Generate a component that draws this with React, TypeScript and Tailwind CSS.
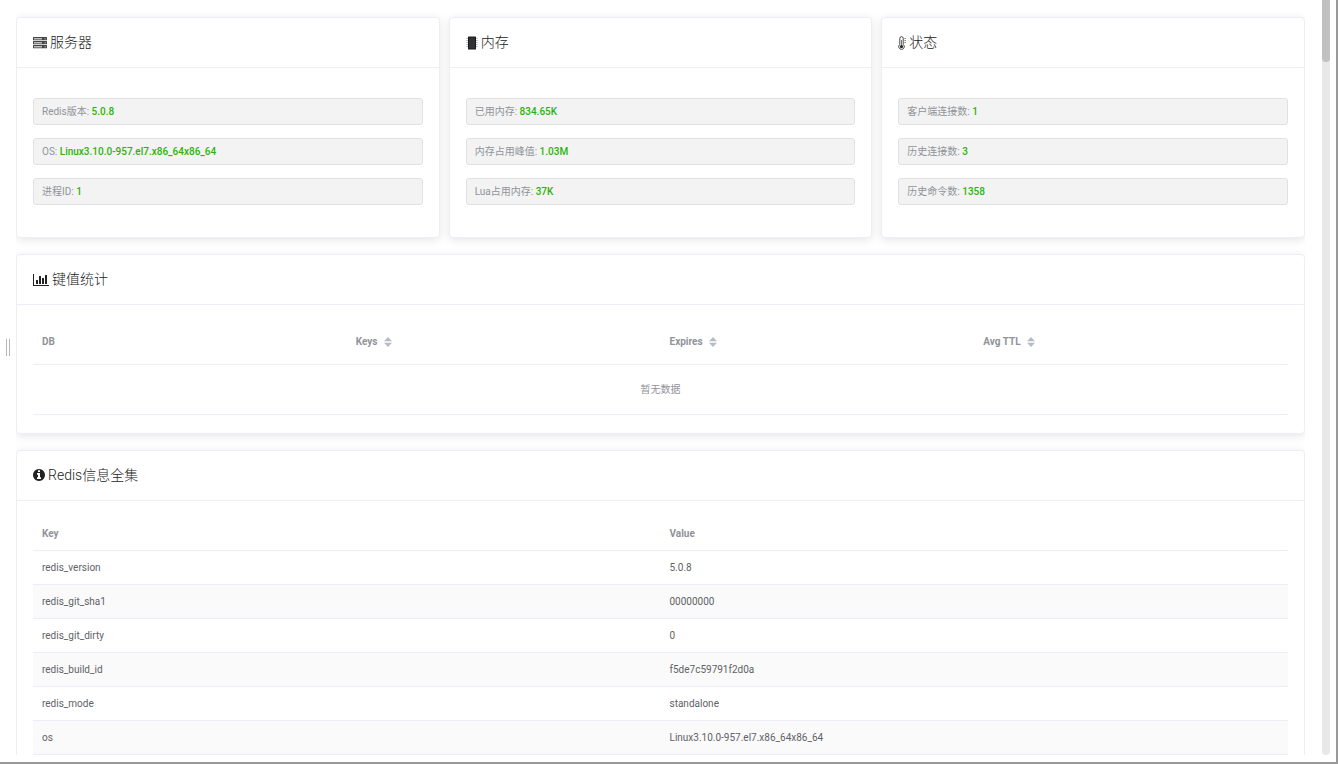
import { ReactNode } from 'react';

interface InfoItem {
  label: string;
  value: string;
}

interface CardProps {
  icon: ReactNode;
  title: string;
  children: ReactNode;
}

const serverInfo: InfoItem[] = [
  { label: 'Redis版本', value: '5.0.8' },
  { label: 'OS', value: 'Linux3.10.0-957.el7.x86_64x86_64' },
  { label: '进程ID', value: '1' },
];

const memoryInfo: InfoItem[] = [
  { label: '已用内存', value: '834.65K' },
  { label: '内存占用峰值', value: '1.03M' },
  { label: 'Lua占用内存', value: '37K' },
];

const statusInfo: InfoItem[] = [
  { label: '客户端连接数', value: '1' },
  { label: '历史连接数', value: '3' },
  { label: '历史命令数', value: '1358' },
];

const allInfo = [
  ['redis_version', '5.0.8'],
  ['redis_git_sha1', '00000000'],
  ['redis_git_dirty', '0'],
  ['redis_build_id', 'f5de7c59791f2d0a'],
  ['redis_mode', 'standalone'],
  ['os', 'Linux3.10.0-957.el7.x86_64x86_64'],
];

const ServerIcon = () => (
  <svg viewBox="0 0 14 12" className="h-3 w-3.5" aria-hidden="true">
    {[0, 4, 8].map((y) => (
      <g key={y}>
        <rect x="0" y={y} width="14" height="3.3" rx="0.5" fill="#444" />
        <rect x="1" y={y + 1} width="8" height="1.5" fill="#bbb" />
        <rect x="11.5" y={y + 1.2} width="1.2" height="1.2" rx="0.6" fill="#ddd" />
      </g>
    ))}
  </svg>
);

const ChipIcon = () => (
  <svg viewBox="0 0 12 14" className="h-3.5 w-3" aria-hidden="true">
    <rect x="2" y="0.5" width="8" height="13" rx="0.6" fill="#1a1a1a" />
    <rect x="3" y="1.5" width="6" height="11" fill="#303234" />
    {[2.5, 4.5, 6.5, 8.5, 10.5].map((y) => (
      <path key={y} d={`M0.3 ${y}H2M10 ${y}h1.7`} stroke="#b0b0b0" strokeWidth="0.9" />
    ))}
  </svg>
);

const ThermometerIcon = () => (
  <svg viewBox="0 0 8 14" className="h-3.5 w-2" fill="none" aria-hidden="true">
    <path d="M1.8 8.4V2.3a1.7 1.7 0 0 1 3.4 0v6.1a2.8 2.8 0 1 1-3.4 0z" stroke="#333" strokeWidth="0.9" />
    <path d="M3.5 4v6" stroke="#666" strokeWidth="0.9" />
    <circle cx="3.5" cy="10.6" r="1.6" fill="#222" />
    <path d="M6.4 2.5H8M6.4 4.5H8M6.4 6.5H8" stroke="#555" strokeWidth="0.7" />
  </svg>
);

const ChartIcon = () => (
  <svg viewBox="0 0 2048 1536" className="h-3 w-4" fill="#222" aria-hidden="true">
    <path d="M640 768v512H384V768h256zm384-512v1024H768V256h256zm1024 1152v128H0V0h128v1408h1920zm-640-896v768h-256V512h256zm384-384v1152h-256V128h256z" />
  </svg>
);

const InfoIcon = () => (
  <svg viewBox="0 0 1536 1536" className="h-3 w-3" fill="#222" aria-hidden="true">
    <path d="M1024 1248v-160q0-14-9-23t-23-9h-96V544q0-14-9-23t-23-9H544q-14 0-23 9t-9 23v160q0 14 9 23t23 9h96v320h-96q-14 0-23 9t-9 23v160q0 14 9 23t23 9h448q14 0 23-9t9-23zM896 352V192q0-14-9-23t-23-9H672q-14 0-23 9t-9 23v160q0 14 9 23t23 9h192q14 0 23-9t9-23zm640 416q0 209-103 385.500T1153.500 1433 768 1536t-385.500-103T103 1153.500 0 768t103-385.500T382.500 103 768 0t385.500 103T1433 382.500 1536 768z" />
  </svg>
);

const Card = ({ icon, title, children }: CardProps) => (
  <section className="rounded-sm border border-[#ebeef5] bg-white shadow-[0_2px_10px_rgba(0,0,0,0.1)]">
    <h2 className="flex h-[50px] items-center gap-[3px] border-b border-[#ebeef5] px-4 text-[14px] font-light text-[#222]">
      {icon}
      <span>{title}</span>
    </h2>
    {children}
  </section>
);

const InfoCard = ({ items, ...rest }: { items: InfoItem[]; icon: ReactNode; title: string }) => (
  <Card {...rest}>
    <ul className="flex flex-col gap-[13px] px-4 pt-[30px] pb-8">
      {items.map((item) => (
        <li key={item.label} className="h-[27px] rounded-[3px] border border-[#e1e1e3] bg-[#f3f3f3] px-2 leading-[25px] text-[#909399]">
          {item.label}: <span className="font-medium text-[#2bb30c]">{item.value}</span>
        </li>
      ))}
    </ul>
  </Card>
);

const SortHeader = ({ label }: { label: string }) => (
  <button type="button" className="flex items-center gap-1.5 font-bold">
    {label}
    <svg viewBox="0 0 8 10" className="h-2.5 w-2" fill="#b6bcc6" aria-hidden="true">
      <path d="M4 0l4 4.300H0zM4 10l4-4.300H0z" />
    </svg>
  </button>
);

export default function App() {
  return (
    <div className="flex h-screen overflow-hidden border-r-2 border-b-2 border-[#999] bg-white font-[Roboto,'Noto_Sans_CJK_SC',sans-serif] text-[10px]">
      <div className="flex w-4 shrink-0 items-center justify-center">
        <div className="mb-[68px] h-[17px] w-1 border-x border-[#b5b5b5]" />
      </div>

      <main className="mb-[7px] flex flex-1 flex-col gap-4 overflow-hidden pt-[17px]">
        <div className="grid grid-cols-3 gap-[9px]">
          <InfoCard icon={<ServerIcon />} title="服务器" items={serverInfo} />
          <InfoCard icon={<ChipIcon />} title="内存" items={memoryInfo} />
          <InfoCard icon={<ThermometerIcon />} title="状态" items={statusInfo} />
        </div>

        <Card icon={<ChartIcon />} title="键值统计">
          <div className="px-4 pt-[15px] pb-[18px]">
            <table className="w-full table-fixed text-left text-[#909399]">
              <thead>
                <tr className="h-11 border-b border-[#ebeef5]">
                  <th className="px-[9px]">DB</th>
                  <th className="px-[9px]"><SortHeader label="Keys" /></th>
                  <th className="px-[9px]"><SortHeader label="Expires" /></th>
                  <th className="px-[9px]"><SortHeader label="Avg TTL" /></th>
                </tr>
              </thead>
              <tbody>
                <tr className="h-[50px] border-b border-[#ebeef5]">
                  <td colSpan={4} className="text-center">暂无数据</td>
                </tr>
              </tbody>
            </table>
          </div>
        </Card>

        <Card icon={<InfoIcon />} title="Redis信息全集">
          <div className="px-4 py-4">
            <table className="w-full table-fixed text-left text-[#606266]">
              <thead>
                <tr className="h-[34px] border-b border-[#ebeef5] text-[#909399]">
                  <th className="px-[9px]">Key</th>
                  <th className="px-[9px]">Value</th>
                </tr>
              </thead>
              <tbody>
                {allInfo.map(([key, value]) => (
                  <tr key={key} className="h-[34px] border-b border-[#ebeef5] even:bg-[#fafafa]">
                    <td className="px-[9px]">{key}</td>
                    <td className="px-[9px]">{value}</td>
                  </tr>
                ))}
              </tbody>
            </table>
          </div>
        </Card>
      </main>

      <div className="mr-1.5 mb-[7px] ml-[17px] w-2 shrink-0 rounded-b bg-[#e8e8e8]">
        <div className="h-[62px] rounded-b bg-[#c1c1c1]" />
      </div>
    </div>
  );
}
